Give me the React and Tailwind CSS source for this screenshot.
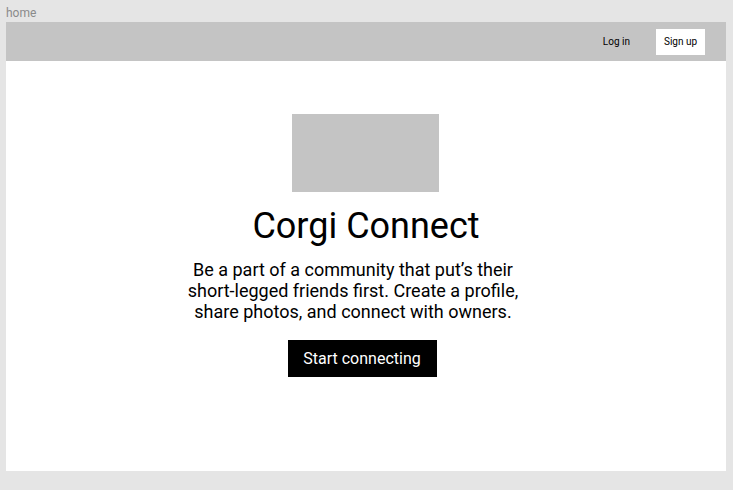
export default function App() {
  return (
    <div className="h-[490px] w-[733px] bg-[#e5e5e5] px-[6px] font-['Roboto',sans-serif] text-black">
      <div className="h-[22px] pt-[6px] text-[12px] leading-[14px] text-[#8a8a8a]">home</div>
      <div className="flex h-[449px] w-[720px] flex-col bg-white">
        {/* top nav */}
        <div className="flex h-[39px] items-center justify-end gap-[18px] bg-[#c4c4c4] pr-[21px]">
          <button className="mt-[1px] px-[8px] py-[6px] text-[10px] leading-[14px]">Log in</button>
          <button className="flex h-[26px] w-[49px] items-center justify-center bg-white text-[10px] leading-[14px]">Sign up</button>
        </div>

        {/* hero */}
        <div className="flex flex-col items-center pt-[53px]">
          <div className="mr-[1px] h-[78px] w-[147px] bg-[#c4c4c4]"></div>
          <h1 className="mt-[13px] text-[36px] leading-[42px]">Corgi Connect</h1>
          <p className="mr-[26px] mt-[12px] text-center text-[18px] leading-[21px]">
            Be a part of a community that put’s their<br />
            short-legged friends first. Create a profile,<br />
            share photos, and connect with owners.
          </p>
          <button className="mr-[8px] mt-[18px] h-[37px] w-[149px] bg-black text-[16px] text-white">Start connecting</button>
        </div>
      </div>
    </div>
  );
}
